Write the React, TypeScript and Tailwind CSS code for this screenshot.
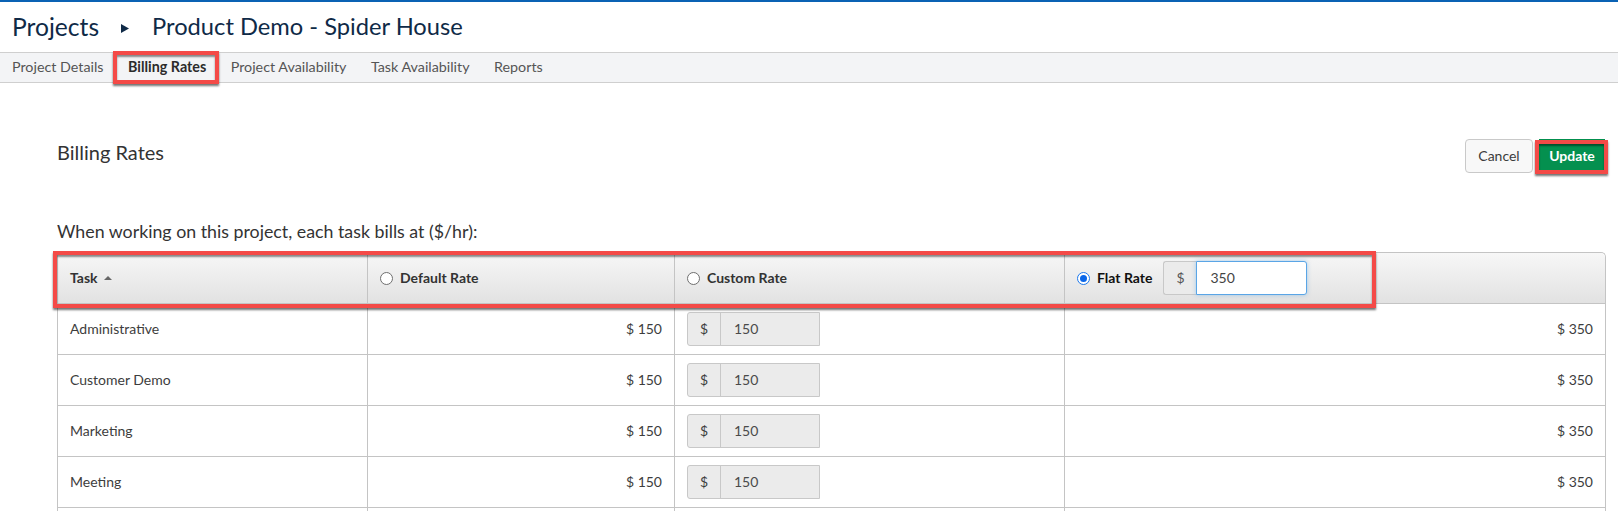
const tabs = ["Project Details", "Billing Rates", "Project Availability", "Task Availability", "Reports"];
const tasks = ["Administrative", "Customer Demo", "Marketing", "Meeting", ""];

function Radio({ checked }: { checked?: boolean }) {
  return checked ? (
    <span className="inline-block w-[13px] h-[13px] rounded-full border border-[#1a78ee] bg-white p-[2px] mr-[7px] shrink-0">
      <span className="block w-full h-full rounded-full bg-[#0a66e8]" />
    </span>
  ) : (
    <span className="inline-block w-[13px] h-[13px] rounded-full border border-[#6f6f6f] bg-white mr-[7px] shrink-0" />
  );
}

function Row({ name }: { name: string }) {
  return (
    <div className="flex h-[51px] border-b border-[#c4c4c4] text-[14px] text-[#3d3d3d]">
      <div className="w-[310px] shrink-0 flex items-center pl-[12px] pb-[2px] border-r border-[#c4c4c4]">{name}</div>
      <div className="w-[307px] shrink-0 flex items-center justify-end pr-[12px] pb-[2px] border-r border-[#c4c4c4]">{name && "$ 150"}</div>
      <div className="w-[390px] shrink-0 flex items-center pl-[12px] border-r border-[#c4c4c4]">
        {name && (
          <div className="flex h-[34px] w-[133px] rounded-l-[3px] border border-[#c8c8c8] bg-[#ebebeb] text-[14px]">
            <span className="w-[33px] flex items-center justify-center pb-[2px] border-r border-[#c8c8c8]">$</span>
            <span className="flex items-center pl-[13px] pb-[2px] text-[#4a4a4a]">150</span>
          </div>
        )}
      </div>
      <div className="flex-1 flex items-center justify-end pr-[12px] pb-[2px]">{name && "$ 350"}</div>
    </div>
  );
}

export default function App() {
  return (
    <div className="relative h-[511px] w-[1618px] overflow-hidden bg-white font-[Lato,sans-serif] text-[#333]">
      <div className="h-[2px] bg-[#0a62b4]" />
      <header className="h-[50px] flex items-center pl-[12px] text-[#0f2a47]">
        <span className="text-[24.6px]">Projects</span>
        <svg className="ml-[22px] mr-[23px] mt-[2px]" width="8" height="9" viewBox="0 0 8 9">
          <path d="M0 0L8 4.5L0 9Z" fill="#0f2a47" />
        </svg>
        <span className="text-[23.7px]">Product Demo - Spider House</span>
      </header>

      <nav className="h-[31px] flex items-center bg-[#f3f4f6] border-y border-[#cfcfcf] pl-[12px] pb-[1px] gap-[24.5px] text-[14.3px] text-[#555]">
        {tabs.map((t) => (
          <span key={t} className={t === "Billing Rates" ? "font-bold text-[#2b2b2b]" : ""}>{t}</span>
        ))}
      </nav>

      <main className="pl-[57px] pr-[12px]">
        <div className="flex items-start justify-between h-[136px] pt-[56px]">
          <h1 className="text-[20px] leading-[28px] text-[#333] -mt-[1px]">Billing Rates</h1>
          <div className="flex">
            <button className="h-[34px] w-[68px] pb-[2px] rounded-[4px] border border-[#c9c9c9] bg-[#f8f8f8] text-[14px] text-[#3c3c3c]">Cancel</button>
            <button className="h-[34px] w-[66px] pb-[2px] ml-[6px] mr-[1px] bg-[#04904f] text-[14px] font-bold text-white">Update</button>
          </div>
        </div>
        <p className="text-[17.8px] leading-[24px] text-[#333] mb-[9px]">When working on this project, each task bills at ($/hr):</p>

        <div className="border-x border-t border-[#c4c4c4] rounded-t-[5px]">
          <div className="flex h-[51px] border-b border-[#c4c4c4] bg-gradient-to-b from-[#f7f7f7] to-[#e2e2e2] text-[14px] font-bold text-[#333] rounded-t-[5px]">
            <div className="w-[310px] shrink-0 flex items-center pl-[12px] border-r border-[#c4c4c4]">
              <span className="-mt-[2px]">Task</span>
              <svg className="ml-[6px]" width="8" height="4" viewBox="0 0 8 4"><path d="M0 4L4 0L8 4Z" fill="#666" /></svg>
            </div>
            <div className="w-[307px] shrink-0 flex items-center pl-[12px] border-r border-[#c4c4c4]"><Radio /><span className="-mt-[2px]">Default Rate</span></div>
            <div className="w-[390px] shrink-0 flex items-center pl-[12px] border-r border-[#c4c4c4]"><Radio /><span className="-mt-[2px]">Custom Rate</span></div>
            <div className="flex-1 flex items-center pl-[12px]">
              <Radio checked />
              <span className="text-[#111] -mt-[2px]">Flat Rate</span>
              <div className="flex h-[34px] w-[144px] ml-[11px] font-normal text-[14px]">
                <span className="w-[33px] flex items-center justify-center pb-[2px] rounded-l-[3px] border border-r-0 border-[#c8c8c8] bg-[#ebebeb] text-[#555]">$</span>
                <span className="flex-1 flex items-center pl-[13px] pb-[2px] rounded-r-[3px] border border-[#5aa5e6] bg-white text-[#444] shadow-[0_0_4px_rgba(90,165,230,0.5)]">350</span>
              </div>
            </div>
          </div>
          {tasks.map((t) => (
            <Row key={t || "blank"} name={t} />
          ))}
        </div>
      </main>

      <div className="absolute left-[113px] top-[51px] w-[106px] h-[33px] border-[4px] border-[#f44a47] shadow-[0_2px_2px_rgba(0,0,0,0.55),inset_0_2px_2px_rgba(0,0,0,0.45)]" />
      <div className="absolute left-[1535px] top-[140px] w-[73px] h-[34px] border-[4px] border-[#f44a47] shadow-[0_2px_2px_rgba(0,0,0,0.55),inset_0_2px_2px_rgba(0,0,0,0.45)]" />
      <div className="absolute left-[53px] top-[251px] w-[1323px] h-[57px] border-[4px] border-[#f44a47] shadow-[0_2px_2px_rgba(0,0,0,0.55),inset_0_2px_2px_rgba(0,0,0,0.45)]" />
    </div>
  );
}
